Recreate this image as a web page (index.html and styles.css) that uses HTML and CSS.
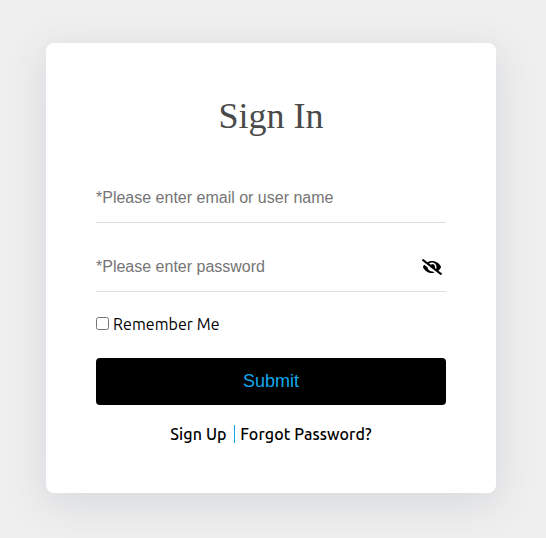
FILE: index.html
```html
<!DOCTYPE html>
<html lang="en">
<head>
<meta charset="utf-8">
<title>Sign In</title>
<link rel="stylesheet" href="styles.css">
</head>
<body>
<form class="card">
  <h1 class="title">Sign In</h1>
  <div class="field">
    <input class="input" type="text" placeholder="*Please enter email or user name">
  </div>
  <div class="field">
    <input class="input" type="password" placeholder="*Please enter password">
    <svg class="eye" viewBox="0 0 640 512" fill="currentColor"><path d="M320 400c-75.85 0-137.25-58.71-142.9-133.11L72.2 185.82c-13.79 17.3-26.48 35.59-36.72 55.59a32.35 32.35 0 0 0 0 29.19C89.71 376.41 197.07 448 320 448c26.91 0 52.87-4 77.89-10.46L346 397.39a144.13 144.13 0 0 1-26 2.61zm313.82 58.1l-110.55-85.44a331.25 331.25 0 0 0 81.25-102.07 32.35 32.35 0 0 0 0-29.19C550.29 135.59 442.93 64 320 64a308.15 308.15 0 0 0-147.32 37.7L45.46 3.37A16 16 0 0 0 23 6.18L3.37 31.45A16 16 0 0 0 6.18 53.9l588.36 454.73a16 16 0 0 0 22.46-2.81l19.64-25.27a16 16 0 0 0-2.82-22.45zm-183.72-142l-39.3-30.38A94.75 94.75 0 0 0 416 256a94.76 94.76 0 0 0-121.31-92.21A47.65 47.65 0 0 1 304 192a46.64 46.64 0 0 1-1.54 10l-73.61-56.89A142.31 142.31 0 0 1 320 112a143.92 143.92 0 0 1 144 144c0 21.63-5.29 41.79-13.9 60.11z"/></svg>
  </div>
  <label class="remember"><input class="check" type="checkbox"><span class="remember-text">Remember Me</span></label>
  <button class="submit" type="button">Submit</button>
  <div class="links">
    <a class="link signup">Sign Up</a>
    <a class="link forgot">Forgot Password?</a>
  </div>
</form>
</body>
</html>
```
FILE: styles.css
```css
* { box-sizing: border-box; }
body {
  margin: 0;
  height: 538px;
  padding: 43px 50px 0 46px;
  overflow: hidden;
  background: #efefef;
  font-family: Ubuntu, "Noto Sans", sans-serif;
  font-size: 16px;
  color: #000;
}
.card {
  width: 450px;
  height: 450px;
  padding: 50px;
  background: #fff;
  border-radius: 8px;
  box-shadow: 0 9px 40px rgba(60, 72, 100, 0.14);
}
.title {
  margin: 0 0 38px;
  height: 42px;
  text-align: center;
  font: 400 36px/46px "Liberation Serif", serif;
  color: #4a4a4a;
}
.field {
  display: flex;
  align-items: center;
  height: 50px;
  margin-bottom: 19px;
  padding-right: 4px;
  border-bottom: 1px solid #dddfe2;
}
.input {
  flex: 1;
  min-width: 0;
  height: 48px;
  padding: 0;
  border: 0;
  outline: 0;
  background: transparent;
  font: 16px "Liberation Sans", sans-serif;
}
.input::placeholder { color: #757575; }
.eye { width: 20px; height: 16px; }
.remember {
  display: flex;
  align-items: center;
  gap: 4px;
  height: 26px;
  margin-bottom: 21px;
}
.check { width: 13px; height: 13px; margin: 0 0 2px; }
.remember-text { letter-spacing: 0.06px; white-space: nowrap; }
.submit {
  display: block;
  width: 350px;
  height: 47px;
  padding: 0;
  border: 0;
  border-radius: 4px;
  background: #000;
  color: #12a9ec;
  font: 18px "Liberation Sans", sans-serif;
}
.links {
  display: flex;
  justify-content: center;
  margin-top: 20px;
}
.link {
  height: 18px;
  line-height: 19px;
  font-weight: 500;
  letter-spacing: 0.1px;
  white-space: nowrap;
}
.signup { padding-right: 7px; }
.forgot { padding-left: 5.5px; border-left: 1px solid #12a9ec; }
```
